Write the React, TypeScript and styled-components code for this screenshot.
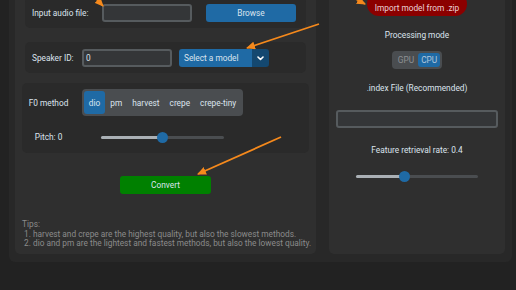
import React from "react";
import styled, { createGlobalStyle } from "styled-components";

const GlobalStyle = createGlobalStyle`
  html, body { margin: 0; padding: 0; background: #222222; overflow: hidden; }
  body { font-family: Roboto, "Noto Sans", "Liberation Sans", sans-serif; }
  * { box-sizing: border-box; }
`;

const Page = styled.div`
  position: relative;
  width: 516px;
  height: 290px;
  overflow: hidden;
  font-size: 8.3px;
  color: #dce4ee;
`;

const Window = styled.div`
  margin: -30px 0 0 9px;
  width: 503px;
  height: 292px;
  padding: 6px 7px 8px 6px;
  background: #282828;
  border-radius: 0 0 6px 6px;
  display: grid;
  grid-template-columns: 301px 176px;
  column-gap: 13px;
`;

const LeftColumn = styled.div`
  background: #2f2f2f;
  border-radius: 0 0 5px 5px;
  display: flex;
  flex-direction: column;
  padding-top: 21px;
`;

const RightColumn = styled.div`
  background: #2f2f2f;
  border-radius: 0 0 5px 5px;
  display: flex;
  flex-direction: column;
  align-items: center;
  padding-top: 16px;
`;

const RowCard = styled.div<{ $mt: number; $gap: number }>`
  margin: ${(p) => p.$mt}px 10px 0 10px;
  padding: 7px 0 6px 7px;
  background: #2a2a2a;
  border-radius: 5px;
  display: flex;
  align-items: center;
  gap: ${(p) => p.$gap}px;
`;

const RowLabel = styled.span<{ $w: number }>`
  width: ${(p) => p.$w}px;
  white-space: nowrap;
  line-height: 12px;
`;

const Entry = styled.div<{ $w: number }>`
  width: ${(p) => p.$w}px;
  height: 18px;
  background: #343638;
  border: 2px solid #565b5e;
  border-radius: 3px;
  padding-left: 2px;
  display: flex;
  align-items: center;
  line-height: 12px;
`;

const BlueButton = styled.div`
  width: 90px;
  height: 18px;
  background: #1f6aa5;
  border-radius: 3px;
  display: flex;
  align-items: center;
  justify-content: center;
`;

const Dropdown = styled.div`
  width: 90px;
  height: 18px;
  border-radius: 3px;
  overflow: hidden;
  display: flex;
`;

const DropdownValue = styled.div`
  flex: 1;
  background: #1f6aa5;
  display: flex;
  align-items: center;
  padding-left: 5px;
  white-space: nowrap;
`;

const DropdownArrow = styled.div`
  width: 17px;
  background: #144870;
  display: flex;
  align-items: center;
  justify-content: center;
`;

const ParamCard = styled.div`
  margin: 10px 7px 0 7px;
  padding: 6px 0 8px 0;
  background: #2a2a2a;
  border-radius: 5px;
  display: grid;
  grid-template-columns: 53px 175px;
  grid-template-rows: 27px 16px;
  row-gap: 13px;
  align-items: center;
  justify-items: center;
`;

const ParamLabel = styled.span`
  white-space: nowrap;
  line-height: 12px;
`;

const Segmented = styled.div<{ $h: number }>`
  display: inline-flex;
  height: ${(p) => p.$h}px;
  padding: 2px;
  background: #4a4d50;
  border-radius: 4px;
`;

const Segment = styled.div<{ $on?: boolean; $dim?: boolean; $pad: number }>`
  display: flex;
  align-items: center;
  padding: 0 ${(p) => p.$pad}px;
  border-radius: 3px;
  white-space: nowrap;
  background: ${(p) => (p.$on ? "#1f6aa5" : "transparent")};
  color: ${(p) => (p.$dim ? (p.$on ? "#b3c7dc" : "#8d9093") : "#dce4ee")};
`;

const SliderBox = styled.div<{ $w: number }>`
  position: relative;
  width: ${(p) => p.$w}px;
  height: 11px;
  display: flex;
  align-items: center;
`;

const Track = styled.div`
  width: 100%;
  height: 3px;
  border-radius: 2px;
  background: #4a4d50;
  display: flex;
`;

const Progress = styled.div`
  height: 100%;
  border-radius: 2px;
  background: #aab0b5;
`;

const Knob = styled.div`
  position: absolute;
  top: 0;
  width: 11px;
  height: 11px;
  margin-left: -5.5px;
  border-radius: 50%;
  background: #1f6aa5;
`;

const ConvertButton = styled.div`
  align-self: center;
  margin-top: 23px;
  width: 91px;
  height: 18px;
  border-radius: 3px;
  background: #008000;
  display: flex;
  align-items: center;
  justify-content: center;
`;

const Tips = styled.div`
  margin-top: 26px;
  padding-left: 7px;
  white-space: pre;
  line-height: 9.5px;
  color: #8b8b8b;
`;

const ImportButton = styled.div`
  width: 100px;
  height: 24px;
  border-radius: 12px;
  background: #8b0000;
  color: #ead2d6;
  display: flex;
  align-items: center;
  justify-content: center;
  padding-top: 8px;
  white-space: nowrap;
`;

const SideLabel = styled.div<{ $mt: number }>`
  margin-top: ${(p) => p.$mt}px;
  line-height: 12px;
  white-space: nowrap;
`;

const SideBlock = styled.div<{ $mt: number }>`
  margin-top: ${(p) => p.$mt}px;
  display: flex;
`;

const Overlay = styled.svg`
  position: absolute;
  left: 0;
  top: 0;
  pointer-events: none;
`;

function Slider({ width, value }: { width: number; value: number }) {
  return (
    <SliderBox $w={width}>
      <Track>
        <Progress style={{ width: `${value * 100}%` }} />
      </Track>
      <Knob style={{ left: `${value * 100}%` }} />
    </SliderBox>
  );
}

const arrows: [number, number, number, number][] = [
  [88, -10, 103, 6],
  [319, 24, 247, 48],
  [281, 137, 198, 174],
  [343, -8, 365, 4],
];

export default function App() {
  return (
    <Page>
      <GlobalStyle />
      <Window>
        <LeftColumn>
          <RowCard $mt={0} $gap={14}>
            <RowLabel $w={56}>Input audio file:</RowLabel>
            <Entry $w={90} />
            <BlueButton>Browse</BlueButton>
          </RowCard>
          <RowCard $mt={14} $gap={7}>
            <RowLabel $w={43}>Speaker ID:</RowLabel>
            <Entry $w={90}>0</Entry>
            <Dropdown>
              <DropdownValue>Select a model</DropdownValue>
              <DropdownArrow>
                <svg width="7" height="5" viewBox="0 0 7 5">
                  <path d="M1 1 L3.5 3.5 L6 1" fill="none" stroke="#ffffff" strokeWidth="1.6" strokeLinecap="round" strokeLinejoin="round" />
                </svg>
              </DropdownArrow>
            </Dropdown>
          </RowCard>
          <ParamCard>
            <ParamLabel>F0 method</ParamLabel>
            <Segmented $h={27}>
              <Segment $on $pad={5}>dio</Segment>
              <Segment $pad={5}>pm</Segment>
              <Segment $pad={5}>harvest</Segment>
              <Segment $pad={5}>crepe</Segment>
              <Segment $pad={5}>crepe-tiny</Segment>
            </Segmented>
            <ParamLabel>Pitch: 0</ParamLabel>
            <Slider width={123} value={0.5} />
          </ParamCard>
          <ConvertButton>Convert</ConvertButton>
          <Tips>{"Tips:\n 1. harvest and crepe are the highest quality, but also the slowest methods.\n 2. dio and pm are the lightest and fastest methods, but also the lowest quality."}</Tips>
        </LeftColumn>
        <RightColumn>
          <ImportButton>Import model from .zip</ImportButton>
          <SideLabel $mt={13}>Processing mode</SideLabel>
          <SideBlock $mt={10}>
            <Segmented $h={18}>
              <Segment $dim $pad={4}>GPU</Segment>
              <Segment $dim $on $pad={3}>CPU</Segment>
            </Segmented>
          </SideBlock>
          <SideLabel $mt={13}>.index File (Recommended)</SideLabel>
          <SideBlock $mt={16}>
            <Entry $w={162} />
          </SideBlock>
          <SideLabel $mt={16}>Feature retrieval rate: 0.4</SideLabel>
          <SideBlock $mt={15}>
            <Slider width={122} value={0.4} />
          </SideBlock>
        </RightColumn>
      </Window>
      <Overlay width={516} height={290} viewBox="0 0 516 290">
        <defs>
          <marker id="head" markerUnits="userSpaceOnUse" markerWidth="9" markerHeight="8" refX="8" refY="4" orient="auto">
            <path d="M0,0 L9,4 L0,8 z" fill="#f5891c" />
          </marker>
        </defs>
        {arrows.map(([x1, y1, x2, y2], i) => (
          <line key={i} x1={x1} y1={y1} x2={x2} y2={y2} stroke="#f5891c" strokeWidth={1.8} markerEnd="url(#head)" />
        ))}
      </Overlay>
    </Page>
  );
}
